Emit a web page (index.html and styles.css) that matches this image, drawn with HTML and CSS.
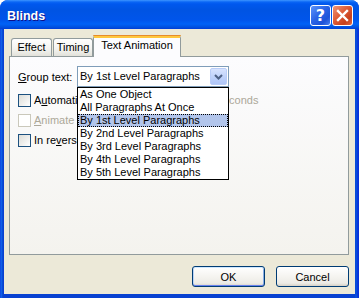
FILE: index.html
```html
<!DOCTYPE html>
<html>
<head>
<meta charset="utf-8">
<link rel="stylesheet" href="styles.css">
</head>
<body>
<div class="window">
  <div class="titlebar">
    <div class="title">Blinds</div>
    <div class="tbtns">
      <div class="tbtn help">?</div>
      <div class="tbtn close">
        <svg width="19" height="19" viewBox="0 0 19 19"><path d="M5 5 L14 14 M14 5 L5 14" stroke="#fff" stroke-width="2.4" stroke-linecap="square"/></svg>
      </div>
    </div>
  </div>
  <div class="client">
    <div class="tabs">
      <div class="tab">Effect</div>
      <div class="tab">Timing</div>
      <div class="tab sel">Text Animation</div>
    </div>
    <div class="panel">
      <div class="grow">
        <span class="lbl"><u>G</u>roup text:</span>
        <div class="combo">
          <span class="cval">By 1st Level Paragraphs</span>
          <span class="cbtn"><svg width="15" height="15" viewBox="0 0 15 15"><polyline points="4,6 7.5,9.5 11,6" fill="none" stroke="#4D6185" stroke-width="2"/></svg></span>
          <div class="list">
            <div class="item">As One Object</div>
            <div class="item">All Paragraphs At Once</div>
            <div class="item hl">By 1st Level Paragraphs</div>
            <div class="item">By 2nd Level Paragraphs</div>
            <div class="item">By 3rd Level Paragraphs</div>
            <div class="item">By 4th Level Paragraphs</div>
            <div class="item">By 5th Level Paragraphs</div>
          </div>
        </div>
      </div>
      <div class="crow">
        <span class="cb"></span><span>A<u>u</u>tomatically after</span><span class="spin"></span><span class="dis">seconds</span>
      </div>
      <div class="crow">
        <span class="cb off"></span><span class="dis"><u>A</u>nimate attached shape</span>
      </div>
      <div class="crow">
        <span class="cb"></span><span>In re<u>v</u>erse order</span>
      </div>
    </div>
    <div class="brow">
      <div class="btn def">OK</div>
      <div class="btn">Cancel</div>
    </div>
  </div>
</div>
</body>
</html>
```
FILE: styles.css
```css
html, body { margin: 0; padding: 0; background: #fff; }
body { font-family: "Liberation Sans", Tahoma, sans-serif; font-size: 11px; color: #000; }
.window {
  width: 359px; height: 298px; display: flex; flex-direction: column;
  background: linear-gradient(to right, #0831D9 0, #166AEE 1px, #0855DD 2px, #0841D1 3px, #0841D1 355px, #0855DD 356px, #0831D9 358px);
  border-radius: 8px 8px 0 0; overflow: hidden;
}
.titlebar {
  height: 29px; flex: none; display: flex; align-items: center; justify-content: space-between;
  padding: 0 6px 0 7px;
  background: linear-gradient(to bottom, #3D95FF 0, #0A66F5 2px, #0058EE 4px, #0054E3 10px, #0055EB 20px, #0062F7 24px, #0052E0 27px, #003DD7 29px);
}
.title { color: #fff; font-weight: bold; font-size: 12.5px; padding-top: 2px; text-shadow: 1px 1px 0 #0F1089; }
.tbtns { display: flex; gap: 1px; padding-top: 1px; }
.tbtn {
  width: 21px; height: 21px; box-sizing: border-box; border: 1px solid #fff; border-radius: 3px;
  display: flex; align-items: center; justify-content: center; color: #fff;
}
.help { background: linear-gradient(135deg, #5C94FA 0, #2A64E6 45%, #1D52D8 75%, #4B82F0 100%); font-weight: bold; font-size: 16px; font-family: "DejaVu Sans", sans-serif; }
.close { background: linear-gradient(135deg, #EE9677 0, #DD5A35 45%, #C7401C 75%, #E06A44 100%); }
.client {
  flex: 1; margin: 0 4px 4px 4px; background: #ECE9D8; display: flex; flex-direction: column;
  padding-top: 6px;
}
.tabs { display: flex; align-items: flex-end; padding-left: 7px; margin-bottom: -1px; position: relative; z-index: 1; height: 22px; }
.tab {
  box-sizing: border-box; height: 18px; margin-bottom: 1px; border: 1px solid #919B9C; border-bottom: none;
  border-radius: 3px 3px 0 0; background: linear-gradient(#FFFFFF, #F3F3EF 60%, #E2E1DA);
  padding: 2px 0 0; line-height: 13px; text-align: center; width: 41px; margin-right: 1px;
}
.tab:nth-child(2) { width: 40px; margin-right: 0; }
.tab.sel {
  width: 88px; height: 22px; margin-bottom: 0; background: #FCFCFE; border-top: 3px solid #FFC73C;
  padding-top: 1px; position: relative;
}
.tab.sel::before { content: ""; position: absolute; left: -1px; right: -1px; top: -3px; height: 1px; background: #E68B2C; border-radius: 3px 3px 0 0; }
.panel {
  box-sizing: border-box; height: 199px; margin: 0 6px 0 5px; border: 1px solid #919B9C;
  background: linear-gradient(#FCFCFE, #F4F3EE); padding: 9px 8px;
}
.grow { display: flex; align-items: center; height: 21px; }
.lbl { width: 59px; }
.combo {
  position: relative; box-sizing: border-box; width: 152px; height: 21px; border: 1px solid #7F9DB9; background: #fff;
  display: flex; align-items: center; justify-content: space-between; padding-left: 2px;
}
.cval { line-height: 13px; }
.cbtn {
  box-sizing: border-box; width: 17px; height: 17px; margin-right: 1px; border: 1px solid #B9CDF8; border-radius: 2px;
  background: linear-gradient(#D7E3FE, #BCD0FA 60%, #B0C6F8); display: flex; align-items: center; justify-content: center;
}
.list {
  position: absolute; left: -1px; top: 20px; width: 152px; box-sizing: border-box; border: 1px solid #000; background: #fff; z-index: 2;
}
.item { height: 13px; line-height: 13px; padding-left: 2px; white-space: nowrap; }
.item.hl { background: #B2C5EB; outline: 1px dotted #000; outline-offset: -1px; }
.crow { display: flex; align-items: center; height: 20px; }
.grow + .crow { margin-top: 3px; }
.cb {
  width: 13px; height: 13px; box-sizing: border-box; border: 1px solid #1C5180;
  background: linear-gradient(135deg, #DCDCD7, #FFFFFF); margin-right: 3px;
}
.cb.off { border-color: #CAC8BB; background: #fff; }
.dis { color: #ACA899; }
.spin { width: 81px; margin: 0 6px; }
.brow { display: flex; justify-content: flex-end; gap: 11px; padding-right: 6px; margin-top: 11px; }
.btn {
  box-sizing: border-box; width: 73px; height: 21px; border: 1px solid #003C74; border-radius: 3px;
  background: linear-gradient(#FFFFFF, #F5F4F0 50%, #ECEBE6 85%, #D6D0C5);
  display: flex; align-items: center; justify-content: center;
}
.btn.def { box-shadow: inset 0 1px 0 #CEE7FF, inset 0 -1px 0 #6982EE, inset 1px 0 0 #BCD4F6, inset -1px 0 0 #89ADE4; }
```
